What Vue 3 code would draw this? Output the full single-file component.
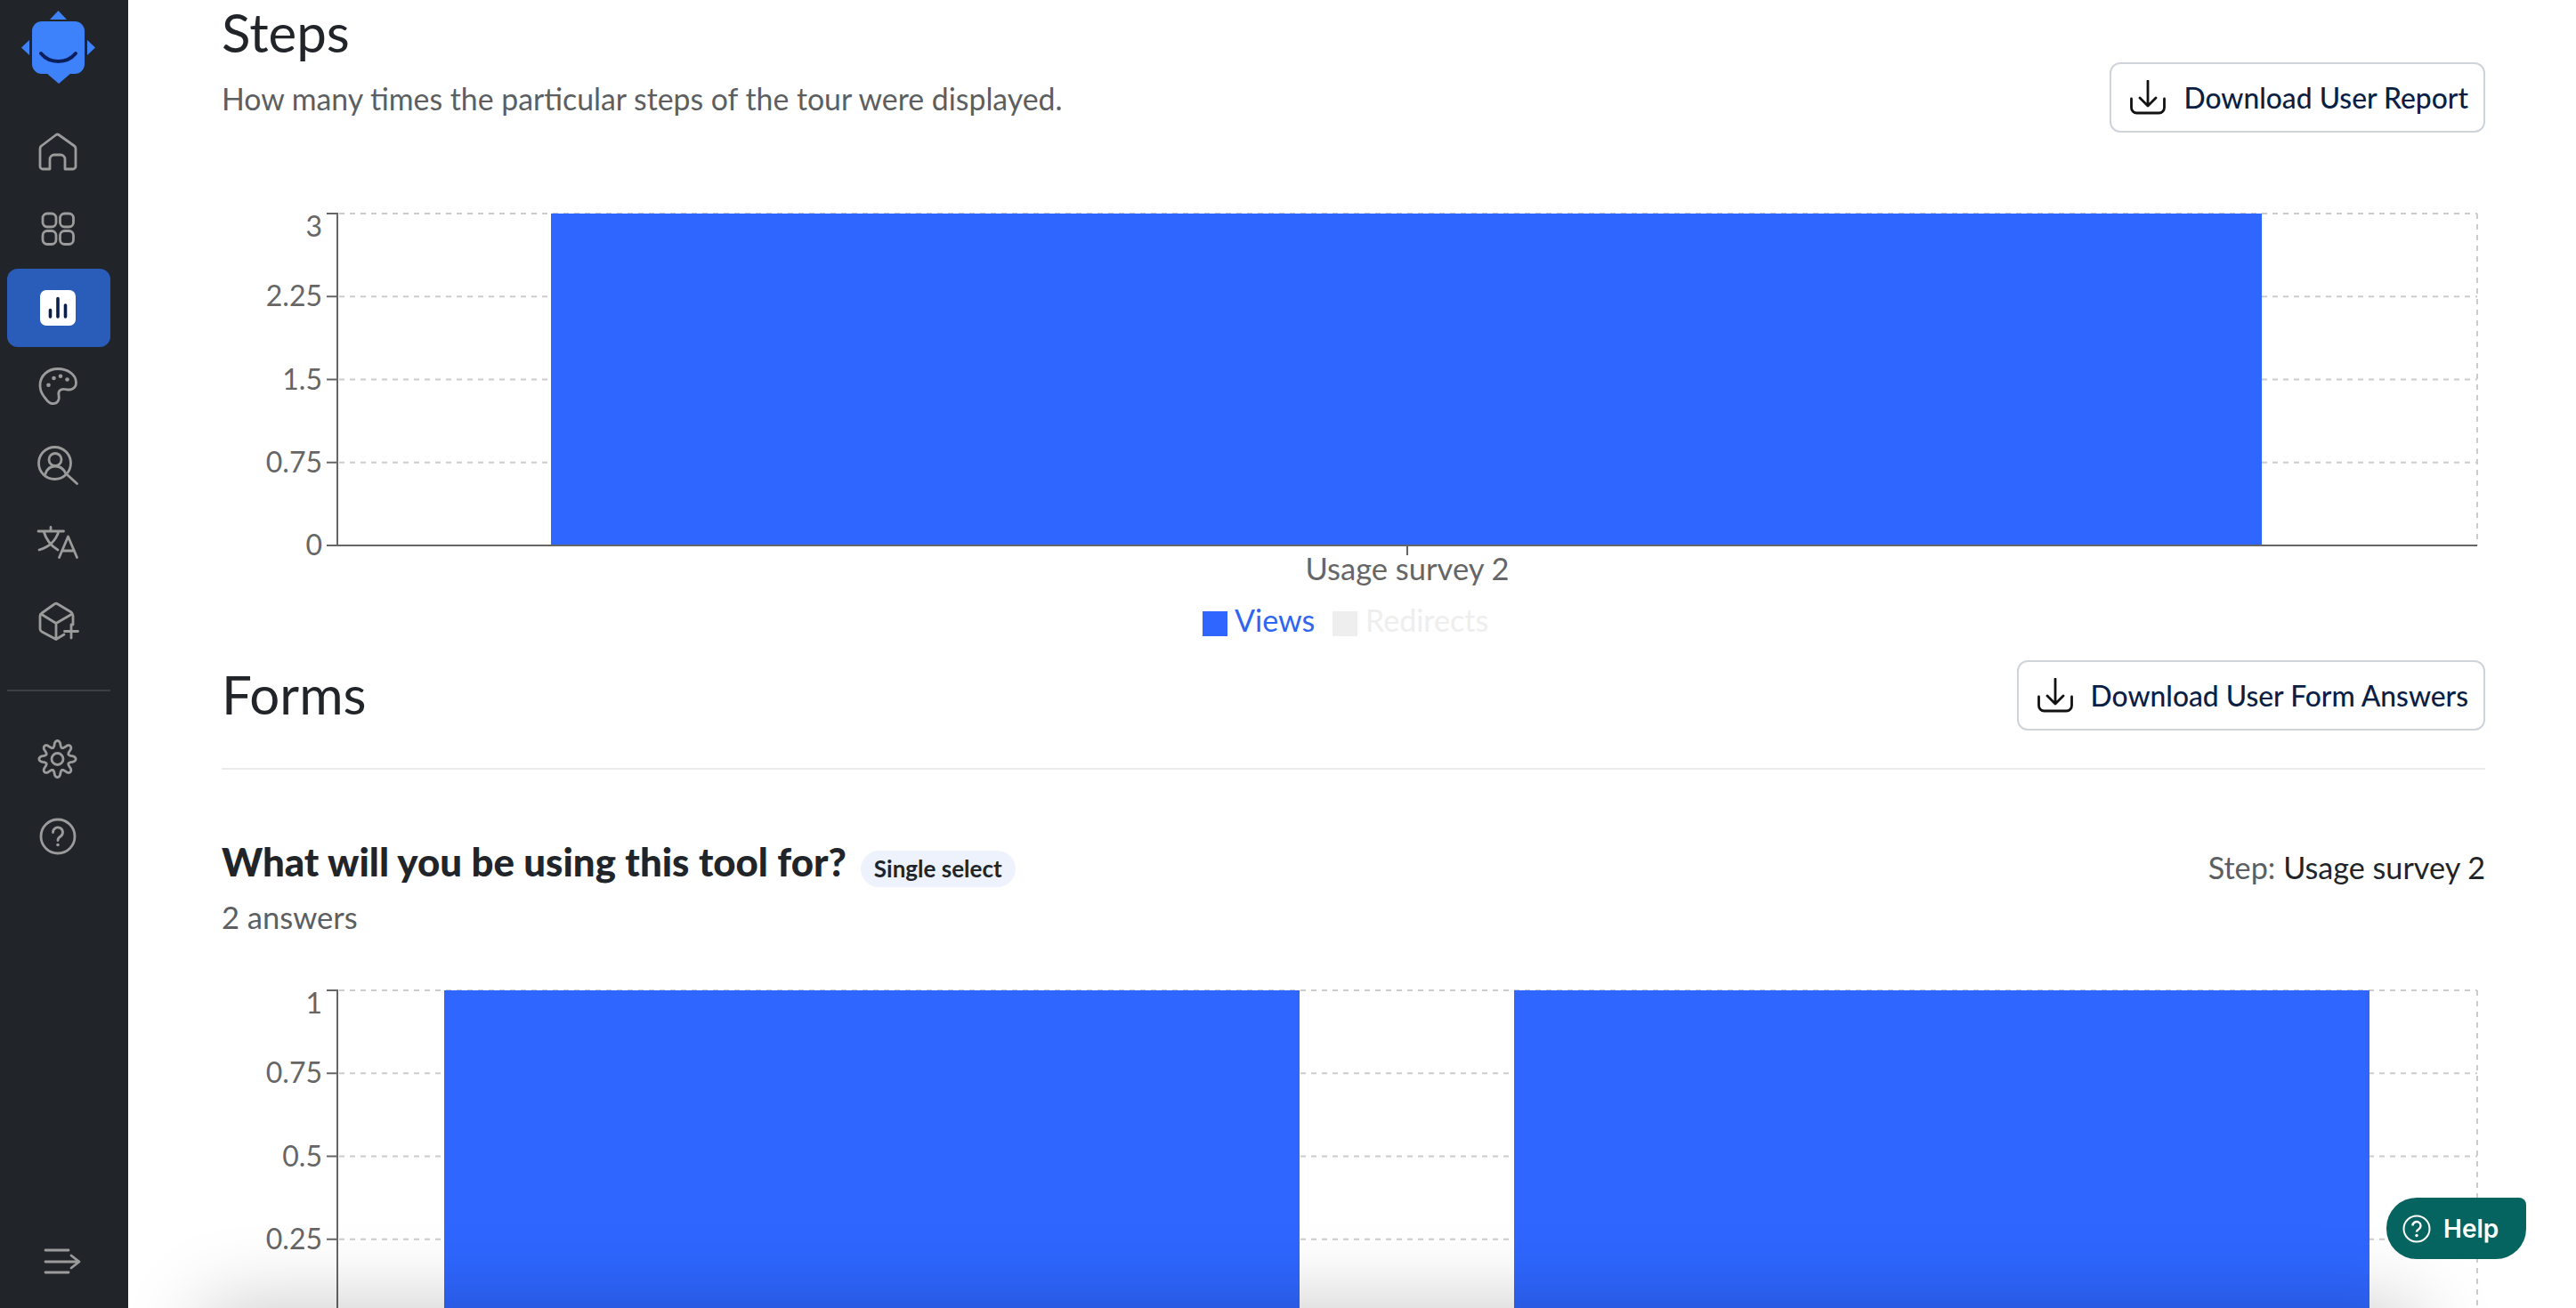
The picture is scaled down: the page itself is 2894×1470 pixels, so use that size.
<template>
  <div class="app">
    <aside class="sidebar">
      <div class="logo">
        <svg width="96" height="96" viewBox="0 0 96 96">
          <path class="logo-fill" d="M44 10 L53.500 0 L63 10 Z M21 33 L12 41.500 L21 50 Z M86 33 L95 41.500 L86 50 Z" />
          <rect class="logo-fill" x="24" y="12" width="59" height="59" rx="11" />
          <path class="logo-fill" d="M40 70 L54 82 L68 70 Z" />
          <path class="logo-smile" d="M34 48 C44 60 63 60 73 48" />
        </svg>
      </div>

      <nav class="nav">
        <a class="nav-item">
          <svg class="icon" viewBox="0 0 44 44"><path d="M2 19 Q2 17 3.500 16 L20 3.500 Q21.500 2.500 23 3.500 L40.500 16 Q42 17 42 19 V39 a3 3 0 0 1-3 3 H30 V31 a5 5 0 0 0-5-5 h-7 a5 5 0 0 0-5 5 V42 H5 a3 3 0 0 1-3-3 Z" /></svg>
        </a>
        <a class="nav-item">
          <svg class="icon" viewBox="0 0 44 44">
            <rect x="5" y="4" width="15" height="15" rx="5" />
            <rect x="24.500" y="4" width="15" height="15" rx="5" />
            <rect x="5" y="23.500" width="15" height="15" rx="5" />
            <rect x="24.500" y="23.500" width="15" height="15" rx="5" />
          </svg>
        </a>
        <a class="nav-item active">
          <svg class="stats" width="40" height="40" viewBox="0 0 40 40">
            <rect width="40" height="40" rx="7" fill="#fff" />
            <path d="M11.500 22.500 V30 M20 9.500 V30 M28.500 17 V30" fill="none" stroke="#0b1f4b" stroke-width="3.600" stroke-linecap="round" />
          </svg>
        </a>
        <a class="nav-item">
          <svg class="icon" viewBox="0 0 44 44">
            <path d="M22 2.500 C33 2.500 42.500 9 42.500 18 C42.500 25 36 27 30 25.500 C25 24.500 22 27.500 23 32 C24 37 22 42.500 15 41.500 C11 41 9 37 6 33 C3 29 2 25 2 21 C2 10 11 2.500 22 2.500 Z" />
            <g class="dots"><circle cx="11.500" cy="20.700" r="2.300" /><circle cx="17.500" cy="13" r="2.300" /><circle cx="25" cy="10.700" r="2.300" /><circle cx="32.500" cy="14.500" r="2.300" /></g>
          </svg>
        </a>
        <a class="nav-item">
          <svg class="icon" viewBox="0 0 44 44">
            <circle cx="18.500" cy="20.500" r="18" />
            <circle cx="19" cy="16.500" r="7" />
            <path d="M8 32.500 C10 26.500 14 24 19 24 C24 24 28.500 26.500 31 32.500 M33 34 L43.500 43.500" />
          </svg>
        </a>
        <a class="nav-item">
          <svg class="icon" viewBox="0 0 44 44">
            <path d="M0 9 H28.500 M14 4.500 V9 M6 9 C9 19 15 26 22 30 M23 9 C20 19 12 27 1 30 M23.500 38.500 L33.500 15 L43.500 38.500 M26.500 31 H40.500" />
          </svg>
        </a>
        <a class="nav-item">
          <svg class="icon" viewBox="0 0 44 44">
            <path d="M29 37 L20 42.500 L4 34 Q2 33 2 31 V16 Q2 14 4 13 L18 3 Q20 1.500 22 3 L37 12 Q39 14 39 16 V26 M3 14 L20 24.500 L38 14 M20 24.500 V42 M37 26 V41 M29.500 33.500 H44.500" />
          </svg>
        </a>
      </nav>

      <div class="nav-divider"></div>

      <nav class="nav">
        <a class="nav-item">
          <svg class="icon" viewBox="0 0 44 44">
            <path :d="gearPath" />
            <circle cx="21.500" cy="22" r="6.500" />
          </svg>
        </a>
        <a class="nav-item">
          <svg class="icon" viewBox="0 0 44 44">
            <circle cx="22" cy="21" r="19" />
            <path d="M16.500 16.500 a5.500 5.500 0 1 1 8.500 4.500 c-2 1.300-3 2.300-3 4.500" />
            <circle class="dots" cx="22" cy="30.500" r="1.800" />
          </svg>
        </a>
      </nav>

      <a class="collapse">
        <svg class="icon" viewBox="0 0 44 44">
          <path d="M3 9 H29 M3 22 H41 M32 15 L41 22 L32 29 M3 34 H29" />
        </svg>
      </a>
    </aside>

    <main class="main">
      <section class="steps-head">
        <div>
          <h2 class="title">Steps</h2>
          <p class="sub">How many times the particular steps of the tour were displayed.</p>
        </div>
        <button class="dl-btn steps-btn">
          <svg class="dl-icon" viewBox="0 0 40 40"><path d="M20 1 V29 M11 20 L20 29 L29 20 M1.500 21 V31 a6 6 0 0 0 6 6 H32.500 a6 6 0 0 0 6-6 V21" /></svg>
          Download User Report
        </button>
      </section>

      <svg class="chart steps-chart" width="2543" height="500" viewBox="0 0 2543 500">
        <g v-for="t in stepTicks" :key="t.label">
          <line class="grid" x1="132" x2="2534" :y1="t.y" :y2="t.y" />
          <line class="axis" x1="118" x2="130" :y1="t.y" :y2="t.y" />
          <text class="tick" x="113" :y="t.labelY" text-anchor="end">{{ t.label }}</text>
        </g>
        <line class="grid" x1="2534" x2="2534" y1="10" y2="383" />
        <rect class="bar" x="370" y="10" width="1922" height="373" />
        <line class="axis" x1="130" x2="130" y1="9" y2="384" />
        <line class="axis" x1="118" x2="2534" y1="383" y2="383" />
        <line class="axis" x1="1332" x2="1332" y1="383" y2="394" />
        <text class="category" x="1332" y="422" text-anchor="middle">Usage survey 2</text>
        <rect class="bar" x="1102" y="457" width="28" height="28" />
        <text class="legend-on" x="1138" y="480">Views</text>
        <rect x="1248" y="457" width="28" height="28" fill="#eeeeee" />
        <text class="legend-off" x="1285" y="480">Redirects</text>
      </svg>

      <section class="forms-head">
        <h2 class="title forms-title">Forms</h2>
        <button class="dl-btn">
          <svg class="dl-icon" viewBox="0 0 40 40"><path d="M20 1 V29 M11 20 L20 29 L29 20 M1.500 21 V31 a6 6 0 0 0 6 6 H32.500 a6 6 0 0 0 6-6 V21" /></svg>
          Download User Form Answers
        </button>
      </section>

      <section class="question">
        <div class="question-row">
          <h3 class="question-title">What will you be using this tool for?</h3>
          <span class="badge">Single select</span>
          <span class="step"><span class="step-label">Step:</span> Usage survey 2</span>
        </div>
        <p class="answers">2 answers</p>
      </section>

      <svg class="chart form-chart" width="2543" height="367" viewBox="0 0 2543 367">
        <g v-for="t in formTicks" :key="t.label">
          <line class="grid" x1="132" x2="2534" :y1="t.y" :y2="t.y" />
          <line class="axis" x1="118" x2="130" :y1="t.y" :y2="t.y" />
          <text class="tick" x="113" :y="t.labelY" text-anchor="end">{{ t.label }}</text>
        </g>
        <line class="grid" x1="2534" x2="2534" y1="10" y2="367" />
        <rect class="bar" x="250" y="10" width="961" height="357" />
        <rect class="bar" x="1452" y="10" width="961" height="357" />
        <line class="axis" x1="130" x2="130" y1="9" y2="367" />
      </svg>
    </main>

    <div class="bottom-shadow"></div>

    <button class="help">
      <svg width="32" height="32" viewBox="0 0 32 32">
        <circle cx="16" cy="16" r="14.500" fill="none" stroke="#fff" stroke-width="2" />
        <path d="M11.500 12.500 a4.500 4.500 0 1 1 7 3.700 c-1.700 1-2.500 1.800-2.500 3.300" fill="none" stroke="#fff" stroke-width="2.400" />
        <circle cx="16" cy="23.500" r="1.700" fill="#fff" />
      </svg>
      Help
    </button>
  </div>
</template>

<script setup>
const plotHeight = 373
const makeTicks = (labels) =>
  labels.map((label, i) => {
    const y = 10 + (plotHeight / (labels.length - 1)) * i
    // the top label is pushed down so it stays inside the chart
    return { label, y, labelY: i === 0 ? y + 26 : y + 11 }
  })

const stepTicks = makeTicks(['3', '2.25', '1.5', '0.75', '0'])
const formTicks = makeTicks(['1', '0.75', '0.5', '0.25', '0']).slice(0, 4)

// wavy circle for the settings icon
const gearPath = (() => {
  const pts = []
  for (let i = 0; i < 160; i++) {
    const a = (i / 160) * Math.PI * 2
    const w = Math.cos(8 * a)
    const r = 17 + 3.6 * Math.sign(w) * Math.pow(Math.abs(w), 0.7)
    pts.push(`${(21.5 + r * Math.cos(a)).toFixed(2)} ${(22 + r * Math.sin(a)).toFixed(2)}`)
  }
  return `M${pts.join(' L')} Z`
})()
</script>

<style scoped>
.app {
  position: relative;
  display: flex;
  height: 1470px;
  overflow: hidden;
  background: #fff;
  font-family: Lato, "Noto Sans", sans-serif;
}

.sidebar {
  position: relative;
  z-index: 3;
  display: flex;
  flex-direction: column;
  flex: 0 0 144px;
  padding: 0 20px 8px 8px;
  box-sizing: border-box;
  width: 144px;
  background: #212529;
}

.logo {
  height: 126px;
  margin-left: 4px;
}

.logo svg {
  display: block;
  margin-top: 12px;
}

.logo-fill {
  fill: #3d82fb;
}

.logo-smile {
  fill: none;
  stroke: #0b1f5c;
  stroke-width: 4;
  stroke-linecap: round;
}

.nav {
  display: flex;
  flex-direction: column;
  width: 116px;
}

.nav-item {
  display: flex;
  align-items: center;
  justify-content: center;
  height: 88px;
  padding-right: 3px;
  border-radius: 12px;
}

.nav-item.active {
  background: #2a5cba;
}

.nav-divider {
  width: 116px;
  height: 2px;
  margin: 33px 0 32px;
  background: #3b3e42;
}

.icon {
  display: block;
  width: 44px;
  height: 44px;
  overflow: visible;
  fill: none;
  stroke: #9b9b9b;
  stroke-width: 2.800;
  stroke-linecap: round;
  stroke-linejoin: round;
}

.dots,
.dots circle {
  fill: #9b9b9b;
  stroke: none;
}

.collapse {
  display: block;
  margin-top: auto;
  margin-left: 40px;
  padding-bottom: 22px;
}

.main {
  flex: 1;
  min-width: 0;
  padding: 0 102px 0 105px;
}

.steps-head {
  display: flex;
  justify-content: space-between;
  align-items: flex-start;
  padding-top: 2px;
}

.title {
  margin: 0;
  font-size: 60px;
  line-height: 68px;
  font-weight: 400;
  color: #212529;
}

.forms-title {
  margin-top: -4px;
}

.sub {
  margin: 19px 0 0;
  font-size: 33.800px;
  line-height: 44px;
  color: #5c5f62;
}

.dl-btn {
  display: flex;
  align-items: center;
  gap: 20px;
  height: 79px;
  padding: 0 17px 0 21px;
  box-sizing: border-box;
  border: 2px solid #ced4da;
  border-radius: 12px;
  background: #fff;
  font-family: inherit;
  font-size: 31.800px;
  font-weight: 500;
  color: #0b1f44;
}

.steps-btn {
  margin-top: 68px;
}

.dl-icon {
  flex: none;
  width: 40px;
  height: 40px;
  fill: none;
  stroke: #111;
  stroke-width: 2.800;
  stroke-linecap: round;
  stroke-linejoin: round;
}

.chart {
  display: block;
}

.steps-chart {
  margin-top: 81px;
}

.grid {
  stroke: #cccccc;
  stroke-width: 2;
  stroke-dasharray: 6 6;
}

.axis {
  stroke: #666666;
  stroke-width: 2;
}

.bar {
  fill: #2e66ff;
}

.tick {
  font-size: 32px;
  fill: #666666;
}

.category {
  font-size: 34.500px;
  fill: #666666;
}

.legend-on {
  font-size: 34px;
  fill: #2e66f0;
}

.legend-off {
  font-size: 34px;
  fill: #eeeeee;
}

.forms-head {
  display: flex;
  justify-content: space-between;
  align-items: center;
  margin-top: 12px;
  padding-bottom: 42px;
  border-bottom: 2px solid #e9ecef;
}

.question {
  padding-top: 78px;
}

.question-row {
  display: flex;
  align-items: flex-start;
}

.question-title {
  margin: 0;
  font-size: 43.800px;
  line-height: 50px;
  font-weight: 900;
  color: #212529;
}

.badge {
  margin: 13px 0 0 16px;
  padding: 0 15px;
  height: 41px;
  line-height: 41px;
  border-radius: 21px;
  background: #edf2fd;
  font-size: 26px;
  font-weight: 700;
  color: #212529;
}

.step {
  margin: 10px 0 0 auto;
  font-size: 34.200px;
  line-height: 44px;
  color: #212529;
}

.step-label {
  color: #5c5f62;
}

.answers {
  margin: 12px 0 0;
  font-size: 34.500px;
  line-height: 44px;
  color: #5c5f62;
}

.form-chart {
  margin-top: 50px;
}

/* shadow of the panel sitting just under the fold */
.bottom-shadow {
  position: absolute;
  z-index: 2;
  left: 250px;
  right: 200px;
  top: 1488px;
  height: 60px;
  box-shadow: 0 0 90px 20px rgba(0, 0, 0, 0.22);
  pointer-events: none;
}

.help {
  position: absolute;
  z-index: 4;
  left: 2681px;
  top: 1346px;
  display: flex;
  align-items: center;
  gap: 14px;
  width: 157px;
  height: 69px;
  padding: 0 0 0 18px;
  box-sizing: border-box;
  border: 0;
  border-radius: 34px 8px 34px 34px;
  background: #066460;
  font-family: Inter, sans-serif;
  font-size: 28px;
  font-weight: 600;
  color: #fff;
}
</style>

<style>
body {
  overflow: hidden;
}
</style>
